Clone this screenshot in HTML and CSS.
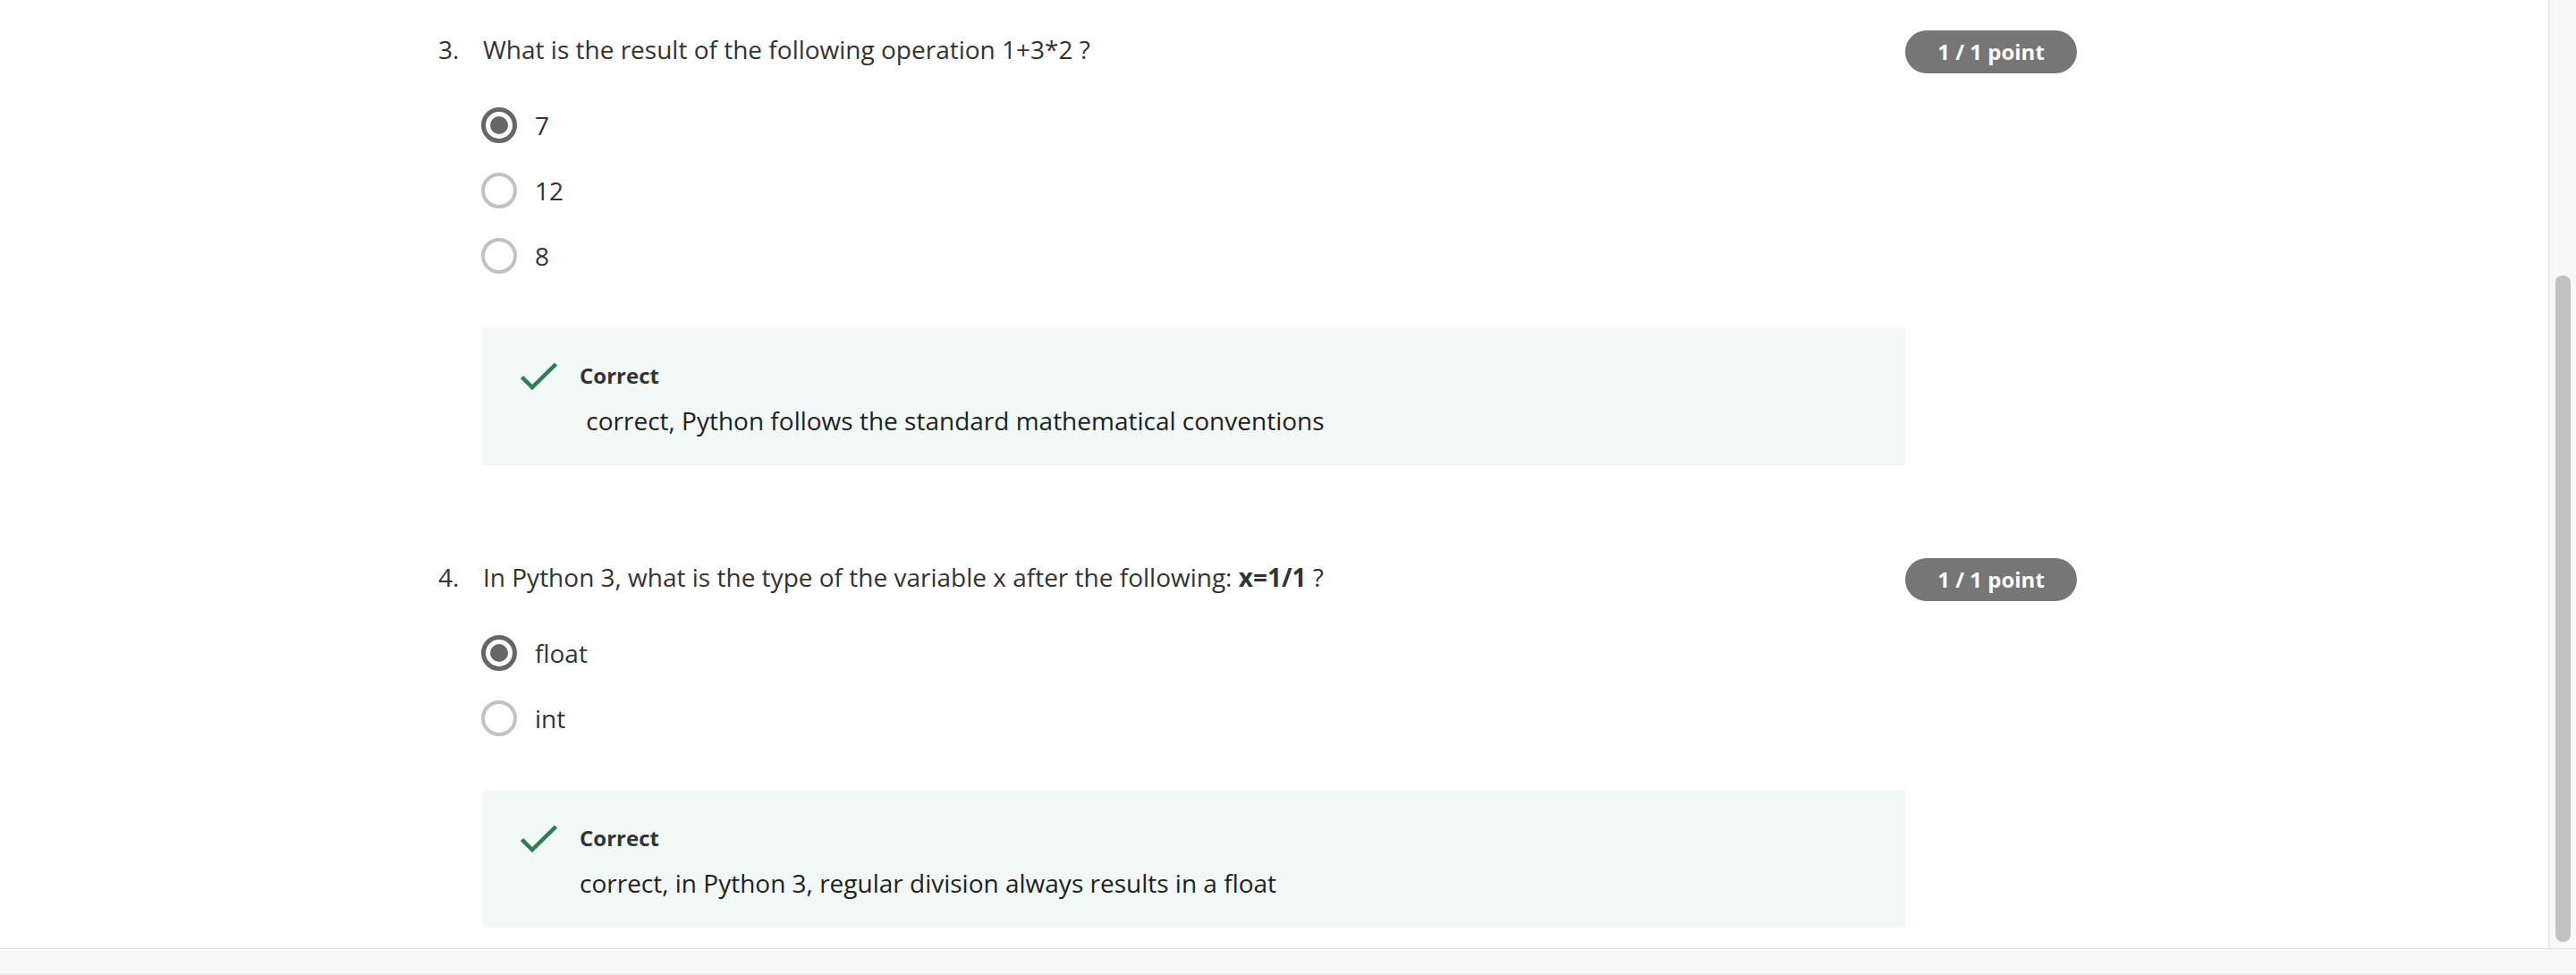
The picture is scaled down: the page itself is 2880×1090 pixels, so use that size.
FILE: index.html
```html
<!DOCTYPE html>
<html lang="en">
<head>
<meta charset="utf-8">
<title>Quiz</title>
<link rel="stylesheet" href="styles.css">
</head>
<body>
<div class="viewport">
  <div class="main">
    <div class="content">
      <div class="quiz">
        <div class="question">
          <div class="qnum">3.</div>
          <div class="qbody">
            <div class="qtext">What is the result of the following operation 1+3*2 ?</div>
            <div class="options">
              <div class="option"><span class="radio checked"></span><span class="otext">7</span></div>
              <div class="option"><span class="radio"></span><span class="otext">12</span></div>
              <div class="option"><span class="radio"></span><span class="otext">8</span></div>
            </div>
            <div class="feedback">
              <div class="fb-head">
                <svg class="check" viewBox="0 0 41 31" width="41" height="31"><polyline points="1.5,16.5 13,28 39.5,2" fill="none" stroke="#2f7d52" stroke-width="4.5"/></svg>
                <span class="fb-title">Correct</span>
              </div>
              <div class="fb-text">&nbsp;correct, Python follows the standard mathematical conventions</div>
            </div>
          </div>
          <div class="badge">1 / 1 point</div>
        </div>

        <div class="question next">
          <div class="qnum">4.</div>
          <div class="qbody">
            <div class="qtext">In Python 3, what is the type of the variable x after the following: <b>x=1/1</b> ?</div>
            <div class="options">
              <div class="option"><span class="radio checked"></span><span class="otext">float</span></div>
              <div class="option"><span class="radio"></span><span class="otext">int</span></div>
            </div>
            <div class="feedback">
              <div class="fb-head">
                <svg class="check" viewBox="0 0 41 31" width="41" height="31"><polyline points="1.5,16.5 13,28 39.5,2" fill="none" stroke="#2f7d52" stroke-width="4.5"/></svg>
                <span class="fb-title">Correct</span>
              </div>
              <div class="fb-text">correct, in Python 3, regular division always results in a float</div>
            </div>
          </div>
          <div class="badge">1 / 1 point</div>
        </div>
      </div>
    </div>
    <div class="vscroll"><div class="thumb"></div></div>
  </div>
  <div class="hbar"></div>
</div>
</body>
</html>
```

FILE: styles.css
```css
* { box-sizing: border-box; }
html, body { margin: 0; padding: 0; }
body {
  font-family: "Open Sans", "Liberation Sans", sans-serif;
  color: #333333;
  background: #ffffff;
  overflow: hidden;
}
.viewport {
  width: 2880px;
  height: 1090px;
  display: flex;
  flex-direction: column;
}
.main {
  height: 1061px;
  display: flex;
  border-bottom: 1px solid #e2e2e2;
}
.content {
  flex: 1;
  background: #ffffff;
  border-right: 2px solid #e8e8e8;
  overflow: hidden;
}
.vscroll {
  width: 29px;
  background: #f8f8f8;
  display: flex;
  flex-direction: column;
  padding: 308px 6px 7px 6px;
}
.thumb {
  flex: 1;
  background: #c1c1c1;
  border-radius: 8px;
}
.hbar {
  flex: 1;
  background: #f8f8f8;
  border-bottom: 2px solid #ebebeb;
}
.quiz {
  padding-top: 34px;
  padding-left: 490px;
}
.question {
  display: flex;
  align-items: flex-start;
  width: 1832px;
}
.question.next { margin-top: 104px; }
.qnum {
  width: 50px;
  font-size: 28px;
  line-height: 42px;
  color: #333333;
}
.qbody { flex: 1; }
.qtext {
  font-size: 28px;
  line-height: 42px;
  color: #333333;
}
.qtext b { font-weight: 700; }
.options {
  margin-top: 44px;
  display: flex;
  flex-direction: column;
  gap: 33px;
}
.option {
  display: flex;
  align-items: center;
  height: 40px;
  margin-left: -2px;
}
.radio {
  width: 40px;
  height: 40px;
  border-radius: 50%;
  border: 4px solid #c2c2c2;
  display: flex;
  align-items: center;
  justify-content: center;
  flex-shrink: 0;
}
.radio.checked { border: 5px solid #666666; }
.radio.checked::after {
  content: "";
  width: 20px;
  height: 20px;
  border-radius: 50%;
  background: #666666;
}
.otext {
  margin-left: 20px;
  font-size: 28px;
  line-height: 40px;
  color: #333333;
}
.feedback {
  margin-top: 60px;
  height: 154px;
  background: #f2f8f5;
  padding: 36px 0 0 42px;
}
.fb-head {
  display: flex;
  align-items: center;
  gap: 25px;
  height: 36px;
}
.check { display: block; flex-shrink: 0; }
.fb-title {
  font-size: 24px;
  line-height: 36px;
  font-weight: 700;
  color: #333333;
}
.fb-text {
  margin-top: 11px;
  margin-left: 66px;
  font-size: 28px;
  line-height: 42px;
  color: #1f1f1f;
}
.badge {
  width: 192px;
  height: 48px;
  border-radius: 24px;
  background: #767676;
  color: #ffffff;
  font-size: 24px;
  font-weight: 700;
  line-height: 48px;
  text-align: center;
  flex-shrink: 0;
}
```
